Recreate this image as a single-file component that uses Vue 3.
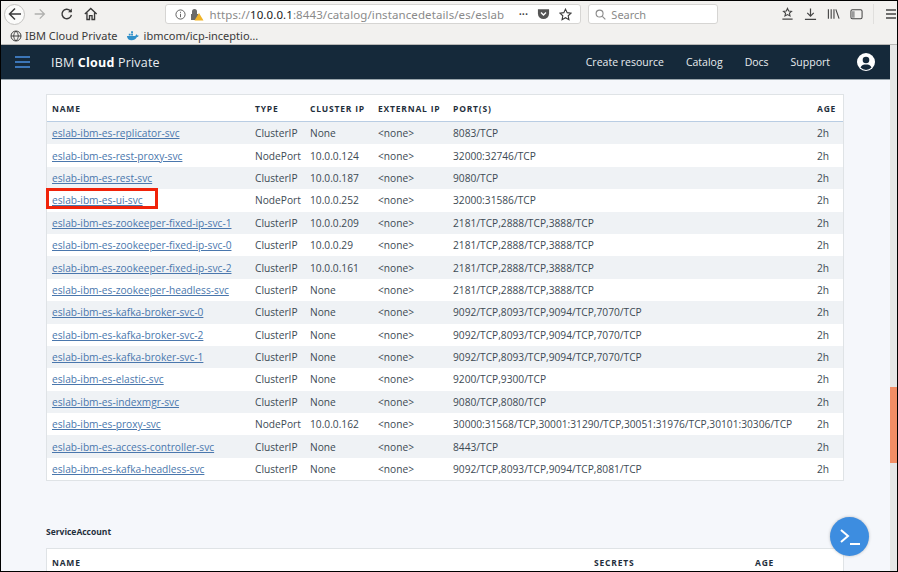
<script setup>
const rows = [
  ['eslab-ibm-es-replicator-svc','ClusterIP','None','8083/TCP'],
  ['eslab-ibm-es-rest-proxy-svc','NodePort','10.0.0.124','32000:32746/TCP'],
  ['eslab-ibm-es-rest-svc','ClusterIP','10.0.0.187','9080/TCP'],
  ['eslab-ibm-es-ui-svc','NodePort','10.0.0.252','32000:31586/TCP'],
  ['eslab-ibm-es-zookeeper-fixed-ip-svc-1','ClusterIP','10.0.0.209','2181/TCP,2888/TCP,3888/TCP'],
  ['eslab-ibm-es-zookeeper-fixed-ip-svc-0','ClusterIP','10.0.0.29','2181/TCP,2888/TCP,3888/TCP'],
  ['eslab-ibm-es-zookeeper-fixed-ip-svc-2','ClusterIP','10.0.0.161','2181/TCP,2888/TCP,3888/TCP'],
  ['eslab-ibm-es-zookeeper-headless-svc','ClusterIP','None','2181/TCP,2888/TCP,3888/TCP'],
  ['eslab-ibm-es-kafka-broker-svc-0','ClusterIP','None','9092/TCP,8093/TCP,9094/TCP,7070/TCP'],
  ['eslab-ibm-es-kafka-broker-svc-2','ClusterIP','None','9092/TCP,8093/TCP,9094/TCP,7070/TCP'],
  ['eslab-ibm-es-kafka-broker-svc-1','ClusterIP','None','9092/TCP,8093/TCP,9094/TCP,7070/TCP'],
  ['eslab-ibm-es-elastic-svc','ClusterIP','None','9200/TCP,9300/TCP'],
  ['eslab-ibm-es-indexmgr-svc','ClusterIP','None','9080/TCP,8080/TCP'],
  ['eslab-ibm-es-proxy-svc','NodePort','10.0.0.162','30000:31568/TCP,30001:31290/TCP,30051:31976/TCP,30101:30306/TCP'],
  ['eslab-ibm-es-access-controller-svc','ClusterIP','None','8443/TCP'],
  ['eslab-ibm-es-kafka-headless-svc','ClusterIP','None','9092/TCP,8093/TCP,9094/TCP,8081/TCP'],
]
</script>

<template>
  <div class="frame">
    <header class="chrome">
      <div class="toolbar">
        <span class="back">
          <svg width="16" height="16" viewBox="0 0 16 16" fill="none" stroke="#3a3a3a" stroke-width="1.5"><path d="M14 8H2.5M8 2.5 2.5 8 8 13.5"/></svg>
        </span>
        <svg class="fwd" width="14" height="14" viewBox="0 0 16 16" fill="none" stroke="#b0b0ae" stroke-width="1.5"><path d="M2 8h11.5M8 2.5 13.5 8 8 13.5"/></svg>
        <svg class="reload" width="14" height="14" viewBox="0 0 16 16" fill="none" stroke="#3a3a3a" stroke-width="1.7"><path d="M13.5 9A5.6 5.6 0 1 1 12 4l1.5 1.5"/><path d="M14 1.5V6H9.5" fill="#3a3a3a" stroke="none"/></svg>
        <svg class="home" width="14" height="14" viewBox="0 0 16 16" fill="none" stroke="#3a3a3a" stroke-width="1.6"><path d="M1 8 8 1.5 15 8M3.5 6.5V14.5H6.5V10h3v4.5h3V6.5"/></svg>
        <div class="url">
          <svg class="info" width="11" height="11" viewBox="0 0 12 12" fill="none" stroke="#555" stroke-width="1"><circle cx="6" cy="6" r="5"/><path d="M6 5.2V9M6 3v1.2"/></svg>
          <svg class="lock" width="14" height="13" viewBox="0 0 14 13"><path d="M2 6V3.5a2.5 2.5 0 0 1 5 0V6M1 6h7v6H1z" fill="#6a6a6a"/><path d="M9 5l4.5 7.5h-9z" fill="#f0b429"/></svg>
          <span class="addr">https://<b>10.0.0.1</b>:8443/catalog/instancedetails/es/eslab</span>
          <span class="dots">•••</span>
          <svg class="pocket" width="13" height="12" viewBox="0 0 14 12"><path d="M1 1h12v4.5a6 6 0 0 1-12 0z" fill="#555"/><path d="M4.3 4.3 7 7l2.7-2.7" stroke="#fff" stroke-width="1.5" fill="none"/></svg>
          <svg class="star" width="13" height="13" viewBox="0 0 14 14" fill="none" stroke="#3a3a3a" stroke-width="1.2"><path d="M7 1.2 8.8 5l4.2.5-3.1 2.9.8 4.2L7 10.5l-3.7 2.1.8-4.2L1 5.5 5.2 5z"/></svg>
        </div>
        <div class="search">
          <svg width="11" height="11" viewBox="0 0 12 12" fill="none" stroke="#8a8a8a" stroke-width="1.2"><circle cx="5" cy="5" r="3.8"/><path d="m8 8 3.3 3.3"/></svg>
          <span>Search</span>
        </div>
        <div class="tools">
          <svg width="13" height="14" viewBox="0 0 14 14" fill="none" stroke="#444" stroke-width="1.2"><path d="M7 1 8.3 3.8l3 .3-2.2 2 .6 3L7 7.6 4.300 9.100l.6-3-2.200-2 3-.3zM1.500 12.500h11"/></svg>
          <svg width="13" height="14" viewBox="0 0 14 14" fill="none" stroke="#444" stroke-width="1.3"><path d="M7 1v8M3.500 5.800 7 9.300l3.500-3.500M1 12.700h12"/></svg>
          <svg width="13" height="14" viewBox="0 0 14 14" fill="none" stroke="#444" stroke-width="1.2"><path d="M1.500 2v10M4.500 2v10M7.500 2v10M9.500 2l3.500 10"/></svg>
          <svg width="13" height="14" viewBox="0 0 14 14" fill="none" stroke="#444" stroke-width="1.100"><rect x="1" y="2.500" width="12" height="9.500" rx="1.500"/><path d="M2 4h3v7H2z" fill="#999" stroke="none"/></svg>
          <i class="sep"></i>
          <svg width="12" height="12" viewBox="0 0 12 12" stroke="#444" stroke-width="1.300"><path d="M1 2h10M1 6h10M1 10h10"/></svg>
        </div>
      </div>
      <div class="bookmarks">
        <svg width="12" height="12" viewBox="0 0 12 12" fill="none" stroke="#444" stroke-width="1"><circle cx="6" cy="6" r="5"/><path d="M1 6h10M6 1c-3 3-3 7 0 10M6 1c3 3 3 7 0 10"/></svg>
        <span class="bm">IBM Cloud Private</span>
        <svg class="whale" width="13" height="10" viewBox="0 0 14 10"><path d="M1 5h9c.5-1 1-2 1.500-2 .5.500.7 1 .8 1.500.5 0 1 0 1.500.3-.5 1-1.300 1.300-2 1.300C10.500 8.500 8.500 9.500 6 9.500 3 9.500 1.300 8 1 5z" fill="#2f8fc9"/><path d="M3 2.500h2v2H3zM5.500 2.500h2v2h-2zM5.500 0h2v2h-2z" fill="#2f8fc9"/></svg>
        <span class="bm">ibmcom/icp-inceptio…</span>
      </div>
    </header>

    <div class="viewport">
      <div class="page">
        <nav class="topbar">
          <svg class="burger" width="15" height="12" viewBox="0 0 15 12" stroke="#4a90e2" stroke-width="1.500"><path d="M0 1h15M0 6h15M0 11h15"/></svg>
          <span class="brand">IBM <b>Cloud</b> Private</span>
          <div class="navlinks">
            <span>Create resource</span>
            <span>Catalog</span>
            <span>Docs</span>
            <span>Support</span>
          </div>
          <svg class="avatar" width="18" height="18" viewBox="0 0 18 18"><circle cx="9" cy="9" r="9" fill="#fff"/><circle cx="9" cy="7" r="3.300" fill="#15293a"/><path d="M3.500 14.500C4.500 12 6.500 11.500 9 11.500s4.500.5 5.500 3A7.500 7.500 0 0 1 3.500 14.500z" fill="#15293a"/></svg>
        </nav>

        <main class="content">
          <section class="table services">
            <div class="row head">
              <span>NAME</span><span>TYPE</span><span>CLUSTER IP</span><span>EXTERNAL IP</span><span>PORT(S)</span><span>AGE</span>
            </div>
            <div v-for="(r, i) in rows" :key="r[0]" class="row">
              <span class="namecell"><a>{{ r[0] }}</a><i v-if="i === 3" class="mark"></i></span>
              <span>{{ r[1] }}</span><span>{{ r[2] }}</span><span>&lt;none&gt;</span><span>{{ r[3] }}</span><span>2h</span>
            </div>
          </section>

          <h3 class="title">ServiceAccount</h3>

          <section class="table accounts">
            <div class="row head acct">
              <span>NAME</span><span>SECRETS</span><span>AGE</span>
            </div>
          </section>
        </main>
      </div>
      <div class="scroll"><i></i></div>
      <button class="fab">
        <svg width="22" height="18" viewBox="0 0 22 18" fill="none" stroke="#fff" stroke-width="2"><path d="M2 2l7 6-7 6M11 16h10"/></svg>
      </button>
    </div>
  </div>
</template>

<style scoped>
.frame {
  width: 898px;
  height: 572px;
  box-sizing: border-box;
  border: 1px solid #000;
  display: flex;
  flex-direction: column;
  overflow: hidden;
  font-family: "Open Sans", "Noto Sans", sans-serif;
}
.chrome { background: #f2f1ef; height: 44px; flex: none; border-bottom: 1px solid #b9b8b6; box-sizing: border-box; }
.toolbar { height: 26px; display: flex; align-items: center; position: relative; }
.back {
  margin-left: 3px; width: 21px; height: 21px; border-radius: 50%;
  background: #fbfbfa; border: 1px solid #c4c3c1; box-sizing: border-box;
  display: flex; align-items: center; justify-content: center; flex: none;
}
.fwd { margin-left: 8px; }
.reload { margin-left: 13px; }
.home { margin-left: 11px; }
.url {
  margin-left: 64px; margin-left: 67px; width: 431px; height: 20px; box-sizing: border-box;
  background: #fff; border: 1px solid #d6d5d3; border-radius: 3px;
  display: flex; align-items: center; padding: 0 8px 0 9px; font-size: 11.500px; color: #8a8a8a;
  font-family: "Noto Sans", sans-serif;
}
.lock { margin-left: 4px; }
.addr { margin-left: 6px; flex: 1; white-space: nowrap; letter-spacing: .1px; }
.addr b { font-weight: 400; color: #222; }
.dots { font-size: 7px; color: #444; letter-spacing: .5px; margin-right: 9px; }
.star { margin-left: 9px; }
.search {
  margin-left: 7px; width: 134px; height: 20px; box-sizing: border-box;
  background: #fff; border: 1px solid #d6d5d3; border-radius: 3px;
  display: flex; align-items: center; gap: 5px; padding-left: 6px;
  font-size: 11px; color: #8a8a8a; font-family: "Noto Sans", sans-serif;
}
.tools { margin-left: 63px; display: flex; align-items: center; gap: 10px; }
.sep { width: 1px; height: 20px; background: #e0dfdd; margin: 0 1px 0 0; }
.bookmarks {
  height: 17px; display: flex; align-items: center; padding-left: 9px;
  font-size: 11px; color: #3a3a3a; font-family: "Noto Sans", sans-serif;
}
.bm { margin-left: 3px; white-space: nowrap; }
.whale { margin-left: 8px; margin-right: 2px; }

.viewport { flex: 1; display: flex; position: relative; min-height: 0; }
.page { flex: 1; background: #f5f7fb; overflow: hidden; min-width: 0; }
.topbar {
  height: 35px; background: #15293a; color: #e8ecef; display: flex; align-items: center;
  border-bottom: 1px solid #9aa6ad; box-sizing: border-box;
}
.burger { margin-left: 14px; }
.brand { margin-left: 21px; font-size: 12.500px; letter-spacing: .2px; }
.brand b { font-weight: 700; color: #fff; }
.navlinks { margin-left: auto; display: flex; gap: 22px; font-size: 10.500px; }
.avatar { margin: 0 15px 0 27px; }
.content { padding: 14px 46px 0 45px; }
.table { background: #fff; border: 1px solid #dfe3e6; box-sizing: border-box; width: 798px; }
.row {
  display: grid;
  grid-template-columns: 203px 55px 68px 75px 364px 1fr;
  height: 22.400px; align-items: center; padding-left: 5px;
  font-size: 10.200px; color: #3d4a54; white-space: nowrap;
}
.row:nth-child(even) { background: #eff2f5; }
.row.head {
  height: 26px; background: #fff; font-weight: 700; font-size: 8.500px;
  letter-spacing: .8px; color: #1f2f3c; border-bottom: 1px solid #b9cde3;
}
.namecell { position: relative; }
a { color: #4a77ad; text-decoration: underline; }
.mark {
  position: absolute; left: -6px; top: -5px; width: 112px; height: 21px;
  box-sizing: border-box; border: 3px solid #f0230a;
}
.title { margin: 45px 0 0; font-size: 8.500px; font-weight: 700; color: #1f2f3c; height: 22px; line-height: 11px; }
.accounts { border-bottom: 0; }
.row.acct { grid-template-columns: 542px 161px 1fr; border-bottom: 0; }
.scroll { width: 7px; background: #e6e6e6; flex: none; }
.scroll i { display: block; margin-top: 342px; height: 76px; background: #f28d65; }
.fab {
  position: absolute; left: 829px; top: 472px; width: 39px; height: 39px; border-radius: 50%;
  border: 0; padding: 0; background: #3d8de0; display: flex; align-items: center; justify-content: center;
  box-shadow: 0 0 3px rgba(0,0,0,.25);
}
</style>
